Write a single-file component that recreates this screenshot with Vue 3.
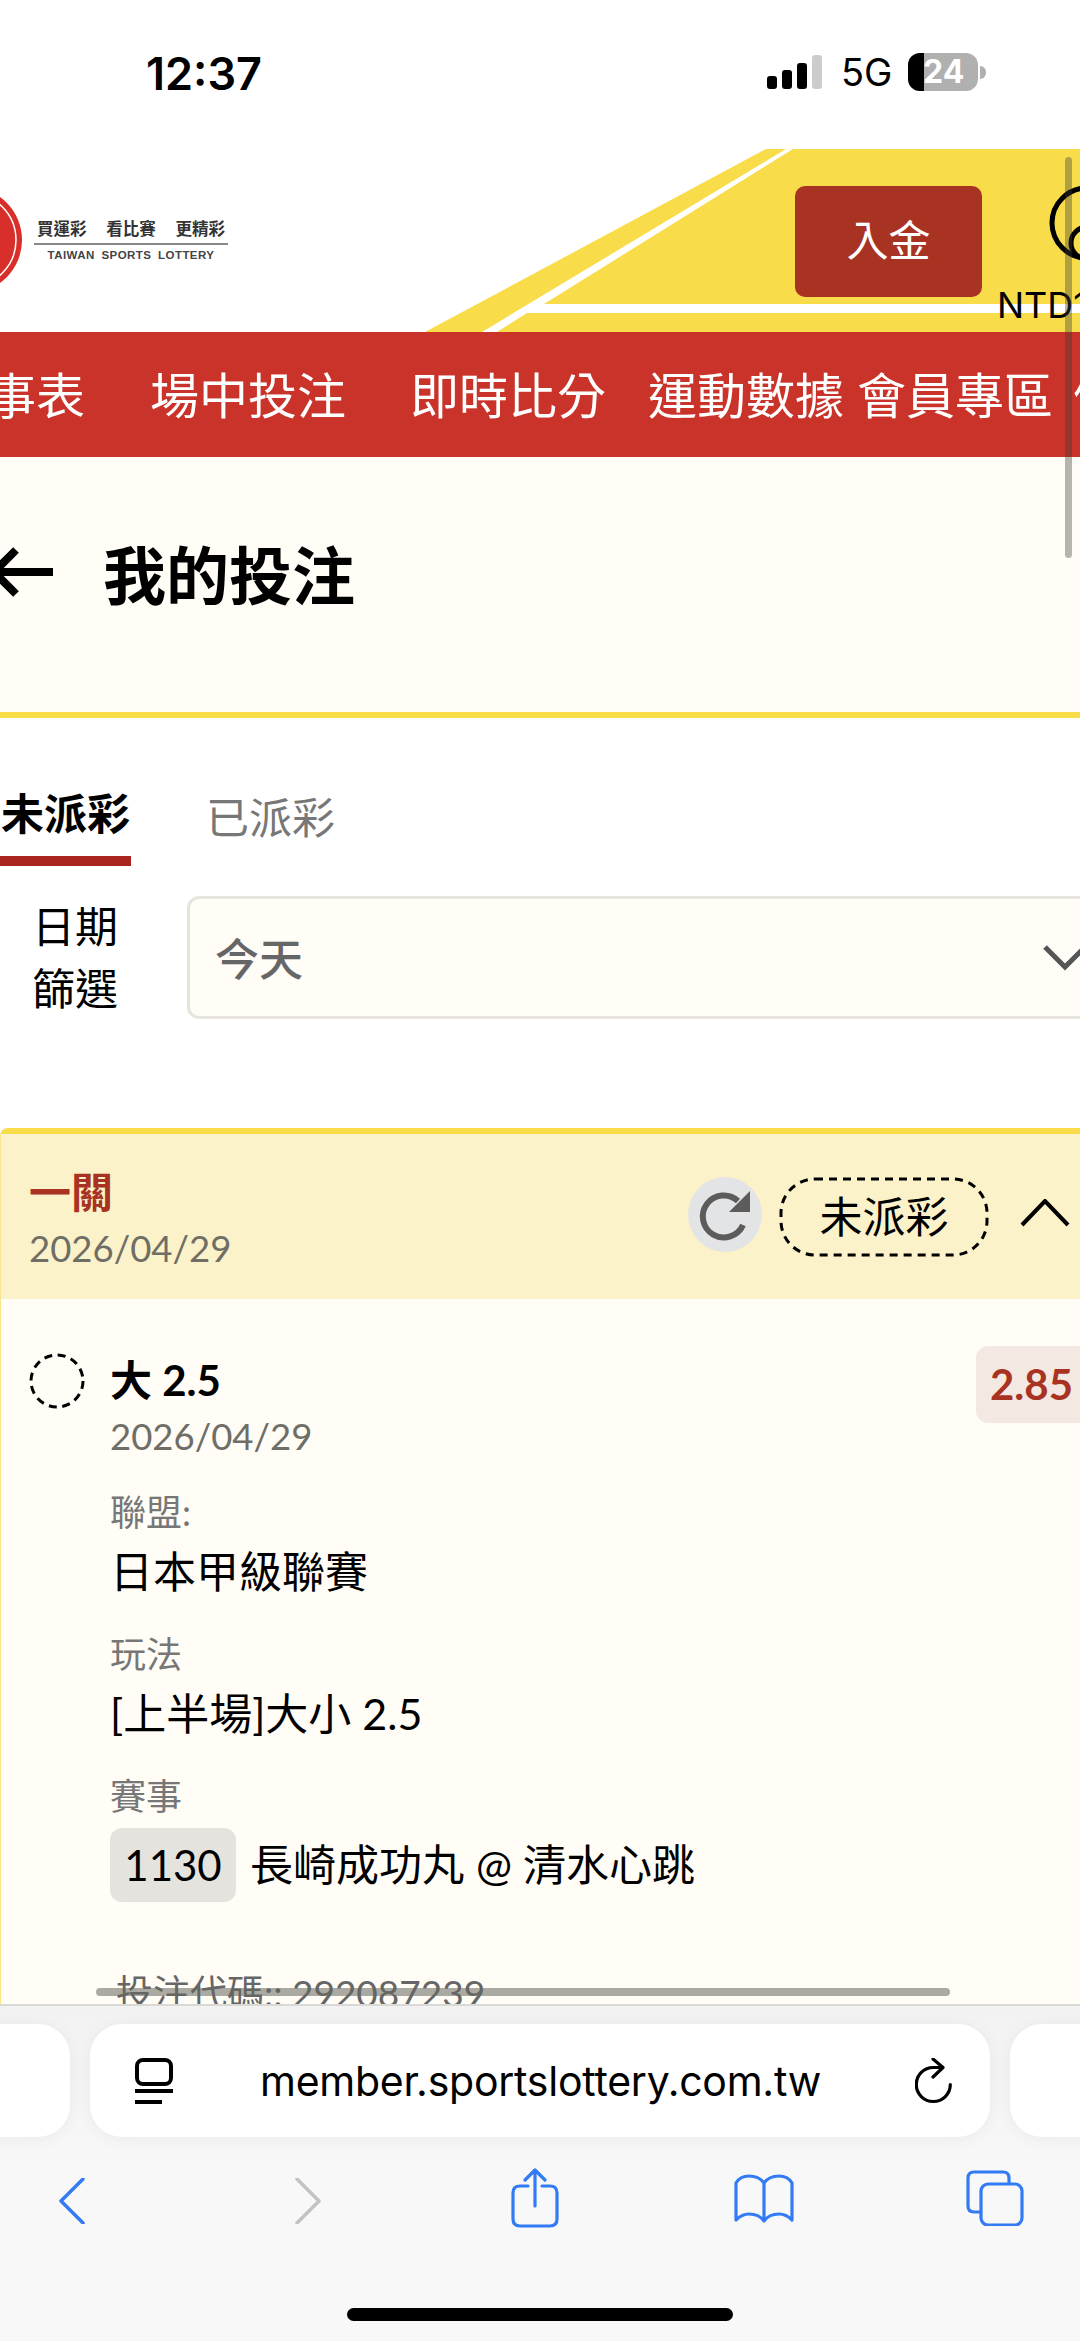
<template>
  <div class="phone">
    <!-- iOS status bar -->
    <div class="status">
      <span class="clock">12:37</span>
      <svg class="signal" width="56" height="36" viewBox="0 0 56 36">
        <rect x="0" y="21" width="10" height="13" rx="3" fill="#000" />
        <rect x="15" y="15" width="10" height="19" rx="3" fill="#000" />
        <rect x="30" y="8" width="10" height="26" rx="3" fill="#000" />
        <rect x="45" y="0" width="10" height="34" rx="3" fill="#ccc" />
      </svg>
      <span class="net">5G</span>
      <div class="battery">
        <div class="battery-fill"></div>
        <span class="battery-num">24</span>
      </div>
      <div class="battery-nub"></div>
    </div>

    <!-- site header -->
    <div class="topbar">
      <svg class="stripes" width="1080" height="183" viewBox="0 0 1080 183">
        <polygon points="766,0 786,0 482,183 425,183" fill="#f9dc4a" />
        <polygon points="793,0 1080,0 1080,155 544,155" fill="#f9dc4a" />
        <polygon points="527,164 1080,164 1080,183 497,183" fill="#f9dc4a" />
      </svg>
      <div class="logo">
        <svg class="logo-mark" width="22" height="110" viewBox="0 0 22 110">
          <circle cx="-31" cy="55" r="53" fill="#d92f2a" />
          <circle cx="-31" cy="55" r="47" fill="none" stroke="#fff" stroke-width="1.5" />
        </svg>
        <div class="logo-text">
          <div class="logo-zh"><span>買運彩</span><span>看比賽</span><span>更精彩</span></div>
          <div class="logo-en">TAIWAN SPORTS LOTTERY</div>
        </div>
      </div>
      <button class="deposit">入金</button>
      <div class="account">
        <svg class="account-icon" width="80" height="80" viewBox="0 0 80 80">
          <circle cx="38" cy="38" r="35" fill="none" stroke="#000" stroke-width="5" />
          <circle cx="38" cy="58" r="16" fill="none" stroke="#000" stroke-width="5" />
        </svg>
        <span class="balance">NTD1</span>
      </div>
    </div>

    <nav class="nav">
      <span v-for="item in navItems" :key="item">{{ item }}</span>
    </nav>

    <div class="content">
      <div class="title-bar">
        <svg class="back-arrow" width="56" height="60" viewBox="0 0 56 60">
          <path d="M53 30H0M16 8-6 30 16 52" fill="none" stroke="#000" stroke-width="8" />
        </svg>
        <h1>我的投注</h1>
      </div>

      <div class="tabs">
        <span class="tab active">未派彩</span>
        <span class="tab">已派彩</span>
      </div>

      <div class="filter">
        <div class="filter-label">日期<br />篩選</div>
        <div class="select">
          <span>今天</span>
          <svg width="50" height="30" viewBox="0 0 50 30">
            <path d="M3 5 23 25 43 5" fill="none" stroke="#555" stroke-width="5" />
          </svg>
        </div>
      </div>

      <section class="card">
        <header class="card-head">
          <div>
            <div class="parlay">一關</div>
            <div class="date">2026/04/29</div>
          </div>
          <div class="card-tools">
            <div class="refresh">
              <svg width="74" height="75" viewBox="0 0 74 75">
                <path d="M50 24A21 21 0 1 0 55 48" fill="none" stroke="#5c5c5c" stroke-width="6" />
                <polygon points="62,14 62,35 41,35" fill="#5c5c5c" />
              </svg>
            </div>
            <div class="state">
              <svg class="state-border" width="210" height="80" viewBox="0 0 210 80">
                <rect x="2" y="2" width="206" height="76" rx="34" fill="none" stroke="#000" stroke-width="3" stroke-dasharray="8 6" />
              </svg>
              未派彩
            </div>
            <svg class="collapse" width="50" height="28" viewBox="0 0 50 28">
              <path d="M2 26 25 2 48 26" fill="none" stroke="#000" stroke-width="4" />
            </svg>
          </div>
        </header>

        <div class="bet">
          <div class="bet-top">
            <svg class="pending" width="56" height="56" viewBox="0 0 56 56">
              <circle cx="28" cy="28" r="26" fill="none" stroke="#000" stroke-width="3" stroke-dasharray="8 5.6" />
            </svg>
            <div class="bet-pick">
              <div class="pick">大 2.5</div>
              <div class="date">2026/04/29</div>
            </div>
            <div class="odds">2.85</div>
          </div>

          <div class="field">
            <div class="field-label">聯盟:</div>
            <div class="field-value league">日本甲級聯賽</div>
          </div>
          <div class="field">
            <div class="field-label">玩法</div>
            <div class="field-value">[上半場]大小 2.5</div>
          </div>
          <div class="field">
            <div class="field-label">賽事</div>
            <div class="field-value match">
              <span class="match-no">1130</span>
              <span>長崎成功丸 @ 清水心跳</span>
            </div>
          </div>
          <div class="code">投注代碼:: 292087239</div>
        </div>
      </section>
    </div>

    <!-- Safari bottom bar -->
    <div class="browser">
      <div class="url-row">
        <div class="pill side"></div>
        <div class="pill url">
          <svg width="38" height="46" viewBox="0 0 38 46">
            <rect x="2" y="2" width="34" height="24" rx="6" fill="none" stroke="#000" stroke-width="4" />
            <path d="M0 33H38M0 44H27" stroke="#000" stroke-width="4" />
          </svg>
          <span class="url-text">member.sportslottery.com.tw</span>
          <svg width="38" height="46" viewBox="0 0 38 46">
            <path d="M27 9.5H18.3A17 17 0 1 0 35.3 26.5" fill="none" stroke="#000" stroke-width="3.2" stroke-linecap="round" />
            <path d="M18 1 28 9.5 18 19" fill="none" stroke="#000" stroke-width="3.2" stroke-linecap="round" stroke-linejoin="round" />
          </svg>
        </div>
        <div class="pill side"></div>
      </div>
      <div class="toolbar">
        <svg class="t-back" width="26" height="46" viewBox="0 0 26 46">
          <path d="M24 1 2 23 24 45" fill="none" stroke="#337bf5" stroke-width="3.5" stroke-linecap="round" stroke-linejoin="round" />
        </svg>
        <svg class="t-forward" width="26" height="46" viewBox="0 0 26 46">
          <path d="M2 1 24 23 2 45" fill="none" stroke="#c2c2c2" stroke-width="3.5" stroke-linecap="round" stroke-linejoin="round" />
        </svg>
        <svg class="t-share" width="48" height="60" viewBox="0 0 48 60">
          <path d="M17 18H9Q2 18 2 25V51Q2 58 9 58H39Q46 58 46 51V25Q46 18 39 18H31" fill="none" stroke="#337bf5" stroke-width="3.2" stroke-linecap="round" />
          <path d="M24 38V2M14 12 24 2 34 12" fill="none" stroke="#337bf5" stroke-width="3.2" stroke-linecap="round" stroke-linejoin="round" />
        </svg>
        <svg class="t-book" width="60" height="50" viewBox="0 0 60 50">
          <path d="M30 9Q25 2 15 2 6 2 2 9V46Q8 40 15 40 25 40 30 47 35 40 45 40 52 40 58 46V9Q54 2 45 2 35 2 30 9V47" fill="none" stroke="#337bf5" stroke-width="3.2" stroke-linecap="round" stroke-linejoin="round" />
        </svg>
        <svg class="t-tabs" width="58" height="56" viewBox="0 0 58 56">
          <path d="M14 42H8Q2 42 2 36V8Q2 2 8 2H37Q43 2 43 8V13" fill="none" stroke="#337bf5" stroke-width="3.2" />
          <rect x="15" y="14" width="41" height="41" rx="7" fill="none" stroke="#337bf5" stroke-width="3.2" />
        </svg>
      </div>
      <div class="home-indicator"></div>
    </div>

    <!-- page scrollbars float over everything -->
    <div class="scroll-v"></div>
    <div class="scroll-h"></div>
  </div>
</template>

<script setup>
const navItems = ['賽事表', '場中投注', '即時比分', '運動數據', '會員專區', '優惠活動']
</script>

<style>
html, body {
  margin: 0;
  background: #fff;
}
</style>

<style scoped>
.phone {
  position: relative;
  width: 1080px;
  height: 2341px;
  overflow: hidden;
  display: flex;
  flex-direction: column;
  background: #fff;
  color: #000;
  font-family: Lato, "Noto Sans CJK TC", sans-serif;
}

/* status bar */
.status {
  height: 149px;
  flex: none;
  display: flex;
  align-items: flex-start;
  padding: 53px 0 0 146px;
  box-sizing: border-box;
  font-family: Inter, sans-serif;
}
.clock {
  font-size: 45px;
  font-weight: 600;
  line-height: 42px;
  width: 621px;
}
.signal {
  margin-top: 2px;
}
.net {
  font-size: 38px;
  line-height: 38px;
  margin: 0 0 0 18px;
  width: 67px;
}
.battery {
  position: relative;
  width: 70px;
  height: 38px;
  border-radius: 12px;
  overflow: hidden;
  background: #b0b0b0;
}
.battery-fill {
  width: 16px;
  height: 100%;
  background: #000;
}
.battery-num {
  position: absolute;
  top: 0;
  left: 15px;
  color: #fff;
  font-size: 32px;
  font-weight: 700;
  line-height: 38px;
}
.battery-nub {
  width: 6px;
  height: 13px;
  margin: 13px 0 0 2px;
  border-radius: 0 6px 6px 0;
  background: #b0b0b0;
}

/* header */
.topbar {
  position: relative;
  height: 183px;
  flex: none;
  display: flex;
  align-items: flex-start;
}
.stripes {
  position: absolute;
  top: 0;
  left: 0;
}
.logo {
  position: relative;
  display: flex;
  align-items: center;
  margin-top: 36px;
}
.logo-text {
  width: 194px;
  margin-left: 12px;
}
.logo-zh {
  display: flex;
  justify-content: space-between;
  padding: 0 3px 4px;
  font-size: 16.5px;
  font-weight: 700;
  line-height: 20px;
  color: #333;
  border-bottom: 2px solid #888;
}
.logo-en {
  margin-top: 3px;
  text-align: center;
  font-family: "Liberation Sans", sans-serif;
  font-size: 11.5px;
  font-weight: 700;
  line-height: 14px;
  letter-spacing: 0.45px;
  word-spacing: 3px;
  color: #444;
}
.deposit {
  position: relative;
  width: 187px;
  height: 111px;
  margin: 37px 0 0 auto;
  padding: 0 0 8px;
  border: 0;
  border-radius: 10px;
  background: #a93323;
  color: #fff;
  font-family: "Noto Sans CJK TC", sans-serif;
  font-size: 42px;
}
.account {
  position: relative;
  flex: none;
  width: 83px;
  margin: 36px 0 0 15px;
  overflow: hidden;
  white-space: nowrap;
}
.account-icon {
  display: block;
  margin-left: 52px;
}
.balance {
  display: block;
  margin-top: 20px;
  font-family: Inter, sans-serif;
  font-size: 36px;
  line-height: 40px;
}

/* main nav */
.nav {
  height: 125px;
  flex: none;
  display: flex;
  align-items: center;
  margin-left: -62px;
  padding-bottom: 5px;
  box-sizing: border-box;
  background: #c93329;
  color: #fff;
  font-family: "Noto Sans CJK TC", sans-serif;
  font-size: 49px;
  white-space: nowrap;
}
.nav span {
  flex: none;
}
.nav span:nth-child(1) { margin-right: 65px; }
.nav span:nth-child(2) { margin-right: 64px; }
.nav span:nth-child(3) { margin-right: 42px; }
.nav span:nth-child(4) { margin-right: 13px; }
.nav span:nth-child(5) { margin-right: 20px; }

.content {
  position: relative;
  flex: 1;
  min-height: 0;
  overflow: hidden;
}

/* page title */
.title-bar {
  height: 261px;
  display: flex;
  align-items: flex-start;
  padding-top: 85px;
  box-sizing: border-box;
  border-bottom: 6px solid #f9dc4a;
  background: #fffdf6;
}
.back-arrow {
  flex: none;
}
.title-bar h1 {
  margin: -12px 0 0 47px;
  font-family: "Noto Sans CJK TC", sans-serif;
  font-size: 63px;
  font-weight: 700;
  line-height: 84px;
}

/* tabs */
.tabs {
  display: flex;
  align-items: flex-start;
  gap: 75px;
  height: 147px;
  padding-top: 65px;
  box-sizing: border-box;
  font-family: "Noto Sans CJK TC", sans-serif;
  font-size: 43px;
}
.tab {
  color: #777;
  line-height: 56px;
  padding-top: 4px;
}
.tab.active {
  width: 131px;
  height: 83px;
  padding: 0;
  box-sizing: border-box;
  color: #000;
  font-weight: 700;
  text-align: center;
  border-bottom: 10px solid #a9241f;
}

/* date filter */
.filter {
  display: flex;
  align-items: center;
  margin: 28px -80px 0 0;
}
.filter-label {
  flex: none;
  width: 187px;
  padding: 0 0 4px 32px;
  box-sizing: border-box;
  font-family: "Noto Sans CJK TC", sans-serif;
  font-size: 43px;
  line-height: 62px;
}
.select {
  flex: 1;
  height: 123px;
  display: flex;
  align-items: center;
  justify-content: space-between;
  padding: 0 65px 0 25px;
  box-sizing: border-box;
  border: 3px solid #e6e4dc;
  border-radius: 12px;
  background: #fffdf6;
  color: #666;
  font-family: "Noto Sans CJK TC", sans-serif;
  font-size: 44px;
  font-weight: 500;
}

/* bet card */
.card {
  margin: 107px -40px 0 0;
  border-top: 6px solid #f9dc4a;
  border-left: 1px solid #f9e68c;
  border-radius: 8px 0 0 0;
  background: #fffdf6;
}
.card-head {
  height: 165px;
  display: flex;
  justify-content: space-between;
  padding: 33px 50px 0 28px;
  box-sizing: border-box;
  background: #fcf2c9;
}
.parlay {
  color: #a93323;
  font-size: 42px;
  font-weight: 700;
  line-height: 50px;
}
.date {
  color: #6f6e66;
  font-size: 36.5px;
  line-height: 46px;
}
.card-head .date {
  margin-top: 8px;
}
.card-tools {
  display: flex;
  align-items: flex-start;
  height: 80px;
  margin-top: 10px;
}
.refresh {
  width: 74px;
  height: 75px;
  border-radius: 50%;
  background: #e3e4e6;
}
.state {
  position: relative;
  width: 210px;
  height: 80px;
  margin: 0 31px 0 17px;
  font-size: 43px;
  line-height: 80px;
  text-align: center;
}
.state-border {
  position: absolute;
  top: 0;
  left: 0;
}
.collapse {
  margin-top: 22px;
}
.bet {
  padding: 47px 0 0 28px;
}
.bet-top {
  display: flex;
  align-items: flex-start;
}
.pending {
  flex: none;
  margin-top: 7px;
}
.bet-pick {
  margin-left: 25px;
}
.pick {
  font-size: 42px;
  font-weight: 700;
  line-height: 56px;
  margin-top: 6px;
}
.bet-pick .date {
  margin-top: 5px;
}
.odds {
  width: 144px;
  height: 77px;
  margin-left: auto;
  border-radius: 12px;
  padding-left: 14px;
  box-sizing: border-box;
  background: #f4e9e2;
  color: #a93323;
  font-size: 42px;
  font-weight: 700;
  line-height: 77px;
}
.field {
  margin: 30px 0 0 81px;
}
.bet-top + .field {
  margin-top: 29px;
}
.field-label {
  color: #777;
  font-size: 36px;
  line-height: 48px;
}
.field-value {
  margin-top: 8px;
  font-size: 43px;
  line-height: 56px;
}
.match {
  display: flex;
  align-items: center;
  gap: 14px;
  margin-top: 8px;
}
.match-no {
  width: 126px;
  height: 74px;
  border-radius: 12px;
  background: #e5e3de;
  font-size: 42px;
  line-height: 74px;
  text-align: center;
}
.code {
  margin: 68px 0 0 87px;
  color: #666;
  font-size: 37px;
  line-height: 46px;
}

/* Safari chrome */
.browser {
  position: relative;
  height: 337px;
  flex: none;
  box-sizing: border-box;
  border-top: 2px solid #d9d9d6;
  background: linear-gradient(#f2f2f2, #f8f8f8 180px);
}
.url-row {
  display: flex;
  gap: 20px;
  margin: 18px -90px 0 -90px;
}
.pill {
  height: 113px;
  border-radius: 32px;
  background: #fff;
  box-shadow: 0 2px 18px rgba(0, 0, 0, 0.05);
}
.side {
  flex: 1;
}
.url {
  flex: none;
  width: 900px;
  display: flex;
  align-items: center;
  padding: 0 37px 0 45px;
  box-sizing: border-box;
}
.url-text {
  flex: 1;
  text-align: center;
  padding-right: 7px;
  font-family: Inter, sans-serif;
  font-size: 41px;
  line-height: 50px;
  letter-spacing: -0.25px;
}
.toolbar {
  display: flex;
  align-items: flex-start;
  margin-top: 31px;
  padding-left: 59px;
}
.t-back { margin-top: 10px; }
.t-forward { margin: 10px 0 0 210px; }
.t-share { margin: 0 0 0 190px; }
.t-book { margin: 6px 0 0 175px; }
.t-tabs { margin: 2px 0 0 172px; }
.home-indicator {
  position: absolute;
  left: 347px;
  bottom: 20px;
  width: 386px;
  height: 13px;
  border-radius: 7px;
  background: #000;
}

/* scrollbars */
.scroll-v {
  position: absolute;
  top: 157px;
  left: 1065px;
  width: 7px;
  height: 401px;
  border-radius: 4px;
  background: rgba(60, 60, 55, 0.38);
}
.scroll-h {
  position: absolute;
  top: 1988px;
  left: 96px;
  width: 854px;
  height: 8px;
  border-radius: 4px;
  background: rgba(100, 100, 92, 0.55);
}
</style>
